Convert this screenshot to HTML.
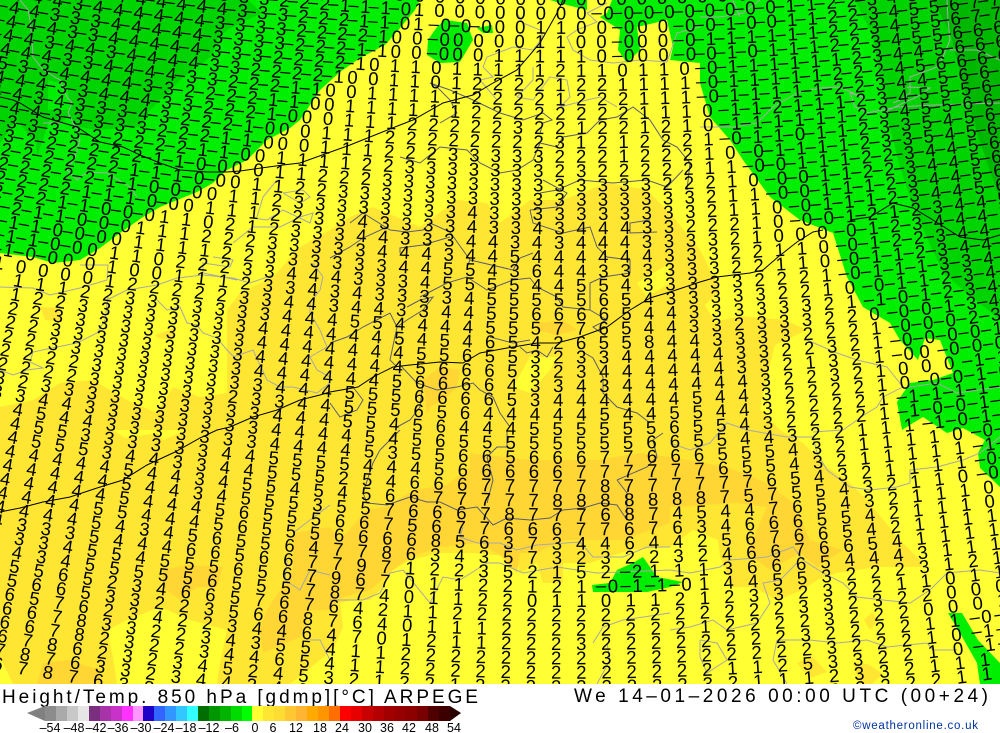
<!DOCTYPE html>
<html><head><meta charset="utf-8"><title>Height/Temp. 850 hPa ARPEGE</title>
<style>
html,body{margin:0;padding:0;background:#fff}
svg{display:block}
.n text{font:18.5px "Liberation Sans",sans-serif;fill:#000;font-kerning:none;text-rendering:geometricPrecision}
.n .d{transform:translateY(-1px)}
.h{fill:none}
.lt{fill:none;stroke:#a8a8a8;stroke-width:1}
.dk{fill:none;stroke:#5c5c72;stroke-width:1}
.bk{fill:none;stroke:#000;stroke-width:1}
.f text{font-family:"Liberation Sans",sans-serif;fill:#000}
</style></head><body>
<svg width="1000" height="733" viewBox="0 0 1000 733" xmlns="http://www.w3.org/2000/svg">
<defs><path id="p" d="M-40 -58.4Q500 45 1040 -34.7"/></defs>
<rect width="1000" height="733" fill="#ffff33"/>
<polygon fill="#ffe633" points="0,407 33,400 60,383 93,380 127,400 157,413 173,387 200,397 227,393 227,310 240,293 273,277 300,247 330,230 350,217 373,207 420,227 457,200 487,203 500,223 530,200 563,200 607,183 647,190 670,213 700,250 720,290 705,305 715,322 740,316 785,320 807,330 775,345 765,385 760,410 780,430 803,443 827,467 847,480 867,500 900,540 920,560 923,567 877,567 837,573 817,580 803,590 777,600 753,587 733,587 720,557 718,540 693,530 670,547 630,550 590,563 563,563 563,583 543,583 537,563 520,573 517,557 473,553 440,553 410,560 393,570 380,590 370,600 353,600 340,603 343,627 333,650 320,660 290,684 0,684"/>
<polygon fill="#ffff33" points="107,630 127,620 160,607 190,620 227,630 220,663 217,684 117,684 113,657"/>
<polygon fill="#ffff33" points="0,657 13,684 0,684"/>
<polygon fill="#ffff33" points="513,387 530,357 557,357 550,370 530,393"/>
<polygon fill="#ffff33" points="637,283 670,263 670,283 647,297"/>
<polygon fill="#ffff33" points="113,430 125,438 157,433 163,440 187,430"/>
<polygon fill="#ffe633" points="40,307 60,308 62,322 45,320"/>
<polygon fill="#ffe633" points="155,335 175,328 172,340 158,338"/>
<polygon fill="#ffe633" points="797,663 813,657 827,672 810,678"/>
<polygon fill="#ffe633" points="853,663 868,664 883,674 872,684 860,684"/>
<polygon fill="#ffe633" points="872,612 878,620 870,630 864,620"/>
<polygon fill="#ffd633" points="470,453 530,460 597,460 640,453 670,457 727,467 767,483 793,503 810,540 843,550 817,567 800,553 770,570 747,553 767,507 737,503 670,507 670,523 623,540 563,540 537,553 520,553 517,573 500,555 477,543 440,547 410,557 393,570 370,590 343,597 330,610 310,610 300,637 263,653 260,630 267,610 293,570 293,533 330,527 340,540 367,510 387,507 413,490 447,485 470,467"/>
<polygon fill="#ffd633" points="163,570 187,565 223,567 217,587 197,587 180,600 163,587"/>
<polygon fill="#ffd633" points="43,663 67,660 100,670 100,684 37,684"/>
<polygon fill="#ffd633" points="423,380 440,367 460,370 457,387 447,397 430,407 427,413"/>
<polygon fill="#ffd633" points="537,323 563,320 577,330 557,335 537,330"/>
<polygon fill="#00ee00" points="0,0 420,0 415,10 400,28 385,45 360,58 340,72 320,90 300,120 290,128 267,140 247,160 227,170 213,183 197,192 160,207 143,217 120,233 100,248 80,260 53,263 33,257 0,253"/>
<polygon fill="#00d400" points="0,0 248,0 262,13 247,20 227,30 217,40 213,55 197,67 180,80 163,97 150,110 140,127 120,128 97,130 80,127 67,117 60,125 50,118 37,157 36,140 30,137 17,120 0,143"/>
<polygon fill="#00ee00" points="48,80 67,85 70,110 48,110"/>
<polygon fill="#00ee00" points="445,20 467,23 473,40 460,62 440,63 427,55 428,40 437,27"/>
<polygon fill="#00ee00" points="477,28 492,25 493,33 483,33"/>
<polygon fill="#00ee00" points="550,0 587,0 587,10 567,5"/>
<polygon fill="#00ee00" points="612,0 1000,0 1000,487 980,468 978,453 985,440 963,428 947,433 923,417 913,423 902,430 897,402 910,383 933,380 953,373 940,340 925,338 918,360 900,340 890,323 863,307 847,277 833,233 800,220 770,197 743,160 730,140 710,117 700,83 700,63 670,60 673,47 667,20 637,27 640,50 627,63 618,50 620,30 600,17 607,13"/>
<polygon fill="#00d400" points="855,0 1000,0 1000,320 943,273 913,207 900,167 887,117 873,37"/>
<polygon fill="#00b800" points="933,0 1000,0 1000,200 977,133 963,83 950,33"/>
<polygon fill="#00ee00" points="948,613 962,613 978,640 1000,663 1000,684 980,684 977,663 960,633"/>
<polygon fill="#00ee00" points="643,557 657,577 683,582 670,587 647,592 593,592 592,585 610,583 617,570 633,563"/>
<polyline class="lt" points="20,0 28,10 30,20 32,40 33,57 43,70 60,80 67,97 72,103 68,113 77,130 80,140 75,157 67,170 77,180 87,172 107,173 130,187 137,197"/>
<polyline class="lt" points="43,123 63,123"/>
<polyline class="lt" points="607,3 587,13 597,22 577,30 567,37 573,50 590,60 613,63 640,60 667,62 677,33 700,27"/>
<polyline class="lt" points="517,13 523,23 540,30 543,37 533,50 513,47 487,57 483,67 493,77 480,80 497,100"/>
<polyline class="lt" points="533,67 533,80 517,97 533,100 550,77 567,80 570,97 560,107 587,100 600,97 617,107"/>
<polyline class="lt" points="700,17 720,17 743,13 760,0"/>
<polyline class="lt" points="733,0 740,17"/>
<polyline class="lt" points="947,0 948,20 950,40 943,57 937,67 910,77 910,93 900,100 893,103"/>
<polyline class="lt" points="950,50 977,50 1000,60"/>
<polyline class="lt" points="907,87 930,88 917,97 903,103 883,113"/>
<polyline class="lt" points="867,113 897,107 933,105 1000,103"/>
<polyline class="lt" points="700,127 733,127 757,123 773,107 797,93 820,88 840,87 857,95 865,98 850,93 855,107 867,112"/>
<polyline class="lt" points="0,287 33,288 50,295 80,288 107,280 108,265 80,265"/>
<polyline class="lt" points="107,300 127,290 157,285 177,278 203,275 233,278 250,283 273,275"/>
<polyline class="lt" points="157,300 167,310 180,307 187,323 197,325 203,333 217,338 227,350 237,360"/>
<polyline class="lt" points="0,370 13,375 27,370 43,368 30,362 33,352 57,347 77,343 97,333 105,320 108,297"/>
<polyline class="lt" points="233,243 253,227 280,227 300,217 313,213 310,223 283,210 267,220 253,218"/>
<polyline class="lt" points="277,180 263,197 257,217"/>
<polyline class="lt" points="283,193 300,203 310,197 303,190 283,193"/>
<polyline class="lt" points="213,257 233,260 230,267 203,263 203,273 223,277 237,280"/>
<polyline class="lt" points="313,263 323,277 320,290 310,303 310,313 320,330 327,347 310,357 317,370 330,377"/>
<polyline class="lt" points="233,357 253,350 267,380 280,387 293,387 317,393 330,383"/>
<polyline class="lt" points="463,527 460,537 477,543 500,543 517,550 537,545 580,542 593,557 623,557 647,547 670,547"/>
<polyline class="lt" points="330,600 363,600 380,593 390,573 403,570 430,603 443,577 460,580 487,563 500,563 523,573 557,567 597,573 670,570 690,573 720,567 730,560 767,557 793,547 803,560 823,573 843,583 857,597 883,600 910,603 930,590 947,573 980,570 1000,573"/>
<polyline class="lt" points="593,643 603,627 623,620 670,613"/>
<polyline class="lt" points="597,684 610,660 607,643"/>
<polyline class="lt" points="670,443 690,450 710,443 727,423 747,430 787,437 813,437 817,453 827,470 850,487 870,490 897,487 910,483 910,470 937,467 963,460 980,453 1000,437"/>
<polyline class="lt" points="807,340 837,353 857,360 887,367 903,387 883,397 877,407 867,413 843,430 813,432"/>
<polyline class="lt" points="903,388 937,383 957,393 1000,387"/>
<polyline class="lt" points="670,630 690,627 713,620 727,630 757,623 770,603 763,583 780,580 797,563"/>
<polyline class="lt" points="777,640 773,660 787,684"/>
<polyline class="lt" points="777,640 810,640 837,643 867,640 887,647 927,643 933,650 957,650"/>
<polyline class="lt" points="700,640 717,643 727,660 707,673 700,657 700,640"/>
<polyline class="lt" points="293,533 310,520 330,505"/>
<polyline class="lt" points="287,560 285,580 300,590 310,570 330,575"/>
<polyline class="lt" points="310,640 320,640 330,660"/>
<polyline class="dk" points="400,157 420,163 440,147 467,150 480,163 500,173 517,170 533,160 540,143 557,147 563,137 587,133 600,120 617,117 633,107 650,120 663,140 677,147 690,163 687,190"/>
<polyline class="dk" points="440,123 457,113 450,100 437,87 430,83 450,90 473,100 500,113 523,120 543,113 552,120 543,123 540,133"/>
<polyline class="dk" points="540,193 557,190 580,180 613,183 647,180 667,187 683,170"/>
<polyline class="dk" points="350,223 363,213 390,230 407,232 423,230 430,223 450,232 470,260"/>
<polyline class="dk" points="330,258 350,247 363,238 387,227"/>
<polyline class="dk" points="400,253 400,248 423,245 450,237"/>
<polyline class="dk" points="530,210 557,207 567,193 543,180"/>
<polyline class="dk" points="530,210 533,223 563,233 590,227 597,247 607,257 630,260 630,273 603,277 590,283 590,310 607,320 593,327 607,337"/>
<polyline class="dk" points="447,283 467,277 487,290 513,280 530,278 537,287 557,297 563,307 590,310"/>
<polyline class="dk" points="467,267 470,260 513,270 520,258 533,253"/>
<polyline class="dk" points="397,327 407,320 423,310 433,297 420,300 407,307"/>
<polyline class="dk" points="447,283 420,297"/>
<polyline class="dk" points="330,343 347,337 363,327 390,313 397,327 390,360 397,367"/>
<polyline class="dk" points="330,403 340,417 357,410 363,400 353,387"/>
<polyline class="dk" points="400,365 417,383 437,390 457,387 473,383 480,390 493,397 500,413 510,427"/>
<polyline class="dk" points="423,383 420,407 410,420 397,427"/>
<polyline class="dk" points="490,337 513,343 530,340"/>
<polyline class="dk" points="520,347 527,353 537,350 547,357 553,347"/>
<polyline class="dk" points="583,352 593,358 603,377 603,393 617,407 637,413 650,423"/>
<polyline class="dk" points="650,220 630,223 630,233 657,232"/>
<polyline class="dk" points="367,503 387,505 410,497 427,502 440,502 457,510 477,507 493,525 507,518 530,520 550,518 563,510 583,508 600,503 617,505 627,520"/>
<polyline class="dk" points="367,503 363,493 373,463 380,450 400,430"/>
<polyline class="dk" points="487,457 493,480 487,503"/>
<polyline class="dk" points="487,457 497,447 507,447 507,430"/>
<polyline class="dk" points="617,480 647,467 657,457 653,440 663,433"/>
<polyline class="dk" points="617,480 627,493 627,520"/>
<polyline class="bk" points="0,512 20,508 43,502 70,497 97,488 123,480 147,465 175,452 200,438 217,430 230,427 253,417 277,410 300,400 320,395 330,392 358,387 373,377 393,367 410,365 440,362 463,363 480,353 507,348 537,343 557,343 580,337 607,327 630,310 650,298 670,292 700,282 717,277 750,273 763,270 778,257 797,242 813,232 823,230"/>
<polyline class="bk" points="0,97 13,100 20,103 43,117 77,127 100,142 123,147 140,155 160,163 180,170 207,172 227,172 240,171 283,165 300,163 350,145 400,125 413,120 443,103 473,95 493,83 517,70 540,43 557,13 563,0"/>
<polyline class="bk" points="850,220 870,217 893,203 913,208 933,220 960,237 983,240 1000,235"/>
<g class="n">
<g transform="translate(0,5.17)" letter-spacing="9.9"><text><textPath href="#p" startOffset="13.76">000000000000000000000000000000000000000000000</textPath></text></g>
<g transform="translate(0,19.5)" letter-spacing="10.01"><text><textPath href="#p" startOffset="10.55"><tspan dx="7">4444444444443332221110</tspan><tspan dx="-7">100000000</tspan><tspan dx="7">00000000011223455677</tspan></textPath></text><text class="d"><textPath href="#p" startOffset="5.55">––––––––––––––––––––––<tspan class="h">–––––––––</tspan>––––––––––––––––––––</textPath></text></g>
<g transform="translate(0,33.83)" letter-spacing="10.12"><text><textPath href="#p" startOffset="7.34"><tspan dx="7">4444444444444333222110</tspan><tspan dx="-7">1</tspan><tspan dx="7">000</tspan><tspan dx="-7">001100</tspan><tspan dx="7">0</tspan><tspan dx="-7">00</tspan><tspan dx="7">0010011223455677</tspan></textPath></text><text class="d"><textPath href="#p" startOffset="2.34">––––––––––––––––––––––<tspan class="h">–</tspan>–––<tspan class="h">––––––</tspan>–<tspan class="h">––</tspan>––––––––––––––––</textPath></text></g>
<g transform="translate(0,48.16)" letter-spacing="10.22"><text><textPath href="#p" startOffset="4.13"><tspan dx="7">444443444444333322221</tspan><tspan dx="-7">00</tspan><tspan dx="7">0</tspan><tspan dx="-7">00001100</tspan><tspan dx="7">0</tspan><tspan dx="-7">00</tspan><tspan dx="7">0111111223455677</tspan></textPath></text><text class="d"><textPath href="#p" startOffset="-0.87">–––––––––––––––––––––<tspan class="h">––</tspan>–<tspan class="h">––––––––</tspan>–<tspan class="h">––</tspan>––––––––––––––––</textPath></text></g>
<g transform="translate(0,62.49)" letter-spacing="10.33"><text><textPath href="#p" startOffset="0.92"><tspan dx="7">444433344444333322211</tspan><tspan dx="-7">00</tspan><tspan dx="7">0</tspan><tspan dx="-7">00111110</tspan><tspan dx="7">0</tspan><tspan dx="-7">00</tspan><tspan dx="7">0010111223455666</tspan></textPath></text><text class="d"><textPath href="#p" startOffset="-4.08">–––––––––––––––––––––<tspan class="h">––</tspan>–<tspan class="h">––––––––</tspan>–<tspan class="h">––</tspan>––––––––––––––––</textPath></text></g>
<g transform="translate(0,76.82)" letter-spacing="10.44"><text><textPath href="#p" startOffset="-2.29"><tspan dx="7">44444334444433322221</tspan><tspan dx="-7">0110111112110110</tspan><tspan dx="7">011111123445666</tspan></textPath></text><text class="d"><textPath href="#p" startOffset="-7.29">––––––––––––––––––––<tspan class="h">––––––––––––––––</tspan>–––––––––––––––</textPath></text></g>
<g transform="translate(0,91.15)" letter-spacing="10.55"><text><textPath href="#p" startOffset="-5.5"><tspan dx="7">4444344344443322221</tspan><tspan dx="-7">00110122221221111</tspan><tspan dx="7">011111222456666</tspan></textPath></text><text class="d"><textPath href="#p" startOffset="-10.5">–––––––––––––––––––<tspan class="h">–––––––––––––––––</tspan>–––––––––––––––</textPath></text></g>
<g transform="translate(0,105.48)" letter-spacing="10.65"><text><textPath href="#p" startOffset="-8.71"><tspan dx="7">444443344443322211</tspan><tspan dx="-7">001111122221222111</tspan><tspan dx="7">011111223445666</tspan></textPath></text><text class="d"><textPath href="#p" startOffset="-13.71">––––––––––––––––––<tspan class="h">––––––––––––––––––</tspan>–––––––––––––––</textPath></text></g>
<g transform="translate(0,119.81)" letter-spacing="10.76"><text><textPath href="#p" startOffset="-11.92"><tspan dx="7">445334444332222110</tspan><tspan dx="-7">0111111222222221110</tspan><tspan dx="7">11211123455566</tspan></textPath></text><text class="d"><textPath href="#p" startOffset="-16.92">––––––––––––––––––<tspan class="h">–––––––––––––––––––</tspan>––––––––––––––</textPath></text></g>
<g transform="translate(0,134.14)" letter-spacing="10.87"><text><textPath href="#p" startOffset="-15.13"><tspan dx="7">44444334443322210</tspan><tspan dx="-7">00111222223221221210</tspan><tspan dx="7">11111123455666</tspan></textPath></text><text class="d"><textPath href="#p" startOffset="-20.13">–––––––––––––––––<tspan class="h">––––––––––––––––––––</tspan>––––––––––––––</textPath></text></g>
<g transform="translate(0,148.47)" letter-spacing="10.97"><text><textPath href="#p" startOffset="-18.34"><tspan dx="7">4444343334322210</tspan><tspan dx="-7">001112222222231212221</tspan><tspan dx="7">01101123354566</tspan></textPath></text><text class="d"><textPath href="#p" startOffset="-23.34">––––––––––––––––<tspan class="h">–––––––––––––––––––––</tspan>––––––––––––––</textPath></text></g>
<g transform="translate(0,162.8)" letter-spacing="11.08"><text><textPath href="#p" startOffset="-21.55"><tspan dx="7">4444433333222110</tspan><tspan dx="-7">0011122233333222122210</tspan><tspan dx="7">0111123354566</tspan></textPath></text><text class="d"><textPath href="#p" startOffset="-26.55">––––––––––––––––<tspan class="h">––––––––––––––––––––––</tspan>–––––––––––––</textPath></text></g>
<g transform="translate(0,177.13)" letter-spacing="11.19"><text><textPath href="#p" startOffset="-24.76"><tspan dx="7">443333322222110</tspan><tspan dx="-7">01111223333333232222211</tspan><tspan dx="7">0011122344566</tspan></textPath></text><text class="d"><textPath href="#p" startOffset="-29.76">–––––––––––––––<tspan class="h">–––––––––––––––––––––––</tspan>–––––––––––––</textPath></text></g>
<g transform="translate(0,191.46)" letter-spacing="11.29"><text><textPath href="#p" startOffset="-27.97"><tspan dx="7">33332222221100</tspan><tspan dx="-7">0011222333333333333322210</tspan><tspan dx="7">001122344566</tspan></textPath></text><text class="d"><textPath href="#p" startOffset="-32.97">––––––––––––––<tspan class="h">–––––––––––––––––––––––––</tspan>––––––––––––</textPath></text></g>
<g transform="translate(0,205.79)" letter-spacing="11.4"><text><textPath href="#p" startOffset="-31.18"><tspan dx="7">22222222211100</tspan><tspan dx="-7">0112233333333333333333211</tspan><tspan dx="7">001112344566</tspan></textPath></text><text class="d"><textPath href="#p" startOffset="-36.18">––––––––––––––<tspan class="h">–––––––––––––––––––––––––</tspan>––––––––––––</textPath></text></g>
<g transform="translate(0,220.12)" letter-spacing="11.51"><text><textPath href="#p" startOffset="-34.39"><tspan dx="7">2222222211000</tspan><tspan dx="-7">011233333333433333333332110</tspan><tspan dx="7">01112344566</tspan></textPath></text><text class="d"><textPath href="#p" startOffset="-39.39">–––––––––––––<tspan class="h">–––––––––––––––––––––––––––</tspan>–––––––––––</textPath></text></g>
<g transform="translate(0,234.45)" letter-spacing="11.62"><text><textPath href="#p" startOffset="-37.6"><tspan dx="7">222222211100</tspan><tspan dx="-7">0111223343333433434443322210</tspan><tspan dx="7">00121234455</tspan></textPath></text><text class="d"><textPath href="#p" startOffset="-42.6">––––––––––––<tspan class="h">––––––––––––––––––––––––––––</tspan>–––––––––––</textPath></text></g>
<g transform="translate(0,248.78)" letter-spacing="11.72"><text><textPath href="#p" startOffset="-40.81"><tspan dx="7">22222211000</tspan><tspan dx="-7">1102123334433344343444333321000</tspan><tspan dx="7">012344455</tspan></textPath></text><text class="d"><textPath href="#p" startOffset="-45.81">–––––––––––<tspan class="h">–––––––––––––––––––––––––––––––</tspan>–––––––––</textPath></text></g>
<g transform="translate(0,263.11)" letter-spacing="11.83"><text><textPath href="#p" startOffset="-44.02"><tspan dx="7">2222211000</tspan><tspan dx="-7">11122233333444344544444433322110</tspan><tspan dx="7">012234445</tspan></textPath></text><text class="d"><textPath href="#p" startOffset="-49.02">––––––––––<tspan class="h">––––––––––––––––––––––––––––––––</tspan>–––––––––</textPath></text></g>
<g transform="translate(0,277.44)" letter-spacing="11.94"><text><textPath href="#p" startOffset="-47.23"><tspan dx="7">222211000</tspan><tspan dx="-7">011112233333344554364433333322110</tspan><tspan dx="7">011234445</tspan></textPath></text><text class="d"><textPath href="#p" startOffset="-52.23">–––––––––<tspan class="h">–––––––––––––––––––––––––––––––––</tspan>–––––––––</textPath></text></g>
<g transform="translate(0,291.77)" letter-spacing="12.04"><text><textPath href="#p" startOffset="-50.44"><tspan dx="7">11111100</tspan><tspan dx="-7">0110222334443334555544554333332221</tspan><tspan dx="7">011133445</tspan></textPath></text><text class="d"><textPath href="#p" startOffset="-55.44">––––––––<tspan class="h">––––––––––––––––––––––––––––––––––</tspan>–––––––––</textPath></text></g>
<g transform="translate(0,306.1)" letter-spacing="12.15"><text><textPath href="#p" startOffset="-53.65"><tspan dx="7">1111100</tspan><tspan dx="-7">001001112334343333455555654333332210</tspan><tspan dx="7">01123445</tspan></textPath></text><text class="d"><textPath href="#p" startOffset="-58.65">–––––––<tspan class="h">––––––––––––––––––––––––––––––––––––</tspan>––––––––</textPath></text></g>
<g transform="translate(0,320.43)" letter-spacing="12.26"><text><textPath href="#p" startOffset="-56.86">0000100001222223344344334455666654433333321<tspan dx="7">10123445</tspan></textPath></text><text class="d"><textPath href="#p" startOffset="-61.86"><tspan class="h">–––––––––––––––––––––––––––––––––––––––––––</tspan>––––––––</textPath></text></g>
<g transform="translate(0,334.76)" letter-spacing="12.36"><text><textPath href="#p" startOffset="-60.07">00001111223333333444554444555776544332333220<tspan dx="7">0013445</tspan></textPath></text><text class="d"><textPath href="#p" startOffset="-65.07"><tspan class="h">––––––––––––––––––––––––––––––––––––––––––––</tspan>–––––––</textPath></text></g>
<g transform="translate(0,349.09)" letter-spacing="12.47"><text><textPath href="#p" startOffset="-63.28">00002122333333334444445454654265584433332221<tspan dx="7">0002344</tspan></textPath></text><text class="d"><textPath href="#p" startOffset="-68.28"><tspan class="h">––––––––––––––––––––––––––––––––––––––––––––</tspan>–––––––</textPath></text></g>
<g transform="translate(0,363.42)" letter-spacing="12.58"><text><textPath href="#p" startOffset="-66.49">00002223333333334444444556553233444443322321<tspan dx="7">00001</tspan></textPath></text><text class="d"><textPath href="#p" startOffset="-71.49"><tspan class="h">––––––––––––––––––––––––––––––––––––––––––––</tspan>–––––</textPath></text></g>
<g transform="translate(0,377.75)" letter-spacing="12.69"><text><textPath href="#p" startOffset="-69.7">00000223333333334444444566653234444443321321<tspan dx="7">0</tspan><tspan dx="-7">0</tspan><tspan dx="7">000</tspan></textPath></text><text class="d"><textPath href="#p" startOffset="-74.7"><tspan class="h">––––––––––––––––––––––––––––––––––––––––––––</tspan>–<tspan class="h">–</tspan>–––</textPath></text></g>
<g transform="translate(0,392.08)" letter-spacing="12.79"><text><textPath href="#p" startOffset="-72.91">00000223333333334444445666643343444444322321000<tspan dx="7">11</tspan></textPath></text><text class="d"><textPath href="#p" startOffset="-77.91"><tspan class="h">–––––––––––––––––––––––––––––––––––––––––––––––</tspan>––</textPath></text></g>
<g transform="translate(0,406.41)" letter-spacing="12.9"><text><textPath href="#p" startOffset="-76.12">000002222333333334445556666534444445443222210<tspan dx="7">0010</tspan></textPath></text><text class="d"><textPath href="#p" startOffset="-81.12"><tspan class="h">–––––––––––––––––––––––––––––––––––––––––––––</tspan>––––</textPath></text></g>
<g transform="translate(0,420.74)" letter-spacing="13.01"><text><textPath href="#p" startOffset="-79.33">00000222233333323344555656444445445544322221<tspan dx="7">11111</tspan></textPath></text><text class="d"><textPath href="#p" startOffset="-84.33"><tspan class="h">––––––––––––––––––––––––––––––––––––––––––––</tspan>–––––</textPath></text></g>
<g transform="translate(0,435.07)" letter-spacing="13.11"><text><textPath href="#p" startOffset="-82.54">00000323333333333444554564445555556554322221<tspan dx="7">10011</tspan></textPath></text><text class="d"><textPath href="#p" startOffset="-87.54"><tspan class="h">––––––––––––––––––––––––––––––––––––––––––––</tspan>–––––</textPath></text></g>
<g transform="translate(0,449.4)" letter-spacing="13.22"><text><textPath href="#p" startOffset="-85.75">000003344333333334444545655555555665544322111<tspan dx="7">1010</tspan></textPath></text><text class="d"><textPath href="#p" startOffset="-90.75"><tspan class="h">–––––––––––––––––––––––––––––––––––––––––––––</tspan>––––</textPath></text></g>
<g transform="translate(0,463.73)" letter-spacing="13.33"><text><textPath href="#p" startOffset="-88.96">00000445443333333444453556656667766655543211110<tspan dx="7">01</tspan></textPath></text><text class="d"><textPath href="#p" startOffset="-93.96"><tspan class="h">–––––––––––––––––––––––––––––––––––––––––––––––</tspan>––</textPath></text></g>
<g transform="translate(0,478.06)" letter-spacing="13.43"><text><textPath href="#p" startOffset="-92.17">00000445533333344555544456666677777765543211111<tspan dx="7">10</tspan></textPath></text><text class="d"><textPath href="#p" startOffset="-97.17"><tspan class="h">–––––––––––––––––––––––––––––––––––––––––––––––</tspan>––</textPath></text></g>
<g transform="translate(0,492.39)" letter-spacing="13.54"><text><textPath href="#p" startOffset="-95.38">00000045553443344555254666777778777777654321111<tspan dx="7">00</tspan></textPath></text><text class="d"><textPath href="#p" startOffset="-100.38"><tspan class="h">–––––––––––––––––––––––––––––––––––––––––––––––</tspan>––</textPath></text></g>
<g transform="translate(0,506.72)" letter-spacing="13.65"><text><textPath href="#p" startOffset="-98.59">00000044444544345545456677777888888875755432110<tspan dx="7">01</tspan></textPath></text><text class="d"><textPath href="#p" startOffset="-103.59"><tspan class="h">–––––––––––––––––––––––––––––––––––––––––––––––</tspan>––</textPath></text></g>
<g transform="translate(0,521.05)" letter-spacing="13.76"><text><textPath href="#p" startOffset="-101.8">0000004444454434555355766678777687454476543211100</textPath></text></g>
<g transform="translate(0,535.38)" letter-spacing="13.86"><text><textPath href="#p" startOffset="-105.01">0000004444454445655566756776667767634666554211100</textPath></text></g>
<g transform="translate(0,549.71)" letter-spacing="13.97"><text><textPath href="#p" startOffset="-108.22">0000004444554445655566668563734464425676654211111</textPath></text></g>
<g transform="translate(0,564.04)" letter-spacing="14.08"><text><textPath href="#p" startOffset="-111.43">0000004444543456556477863435732322324667665411111</textPath></text></g>
<g transform="translate(0,578.37)" letter-spacing="14.18"><text><textPath href="#p" startOffset="-114.64">00000043335444665667797122352152<tspan dx="7">2</tspan><tspan dx="-7">1113666544431111</tspan></textPath></text><text class="d"><textPath href="#p" startOffset="-119.64"><tspan class="h">––––––––––––––––––––––––––––––––</tspan>–</textPath></text></g>
<g transform="translate(0,592.7)" letter-spacing="14.29"><text><textPath href="#p" startOffset="-117.85">0000003334554555656796701122121<tspan dx="7">0110</tspan><tspan dx="-7">14455322231212</tspan></textPath></text><text class="d"><textPath href="#p" startOffset="-122.85"><tspan class="h">–––––––––––––––––––––––––––––––</tspan>––––</textPath></text></g>
<g transform="translate(0,607.03)" letter-spacing="14.4"><text><textPath href="#p" startOffset="-121.06">0000004434555556555787401122011011212332322110111</textPath></text></g>
<g transform="translate(0,621.36)" letter-spacing="14.5"><text><textPath href="#p" startOffset="-124.27">00000005565234665767642112222222222222233232200022</textPath></text></g>
<g transform="translate(0,635.69)" letter-spacing="14.61"><text><textPath href="#p" startOffset="-127.48">0000000566533223566876401112222222212222322200011</textPath></text></g>
<g transform="translate(0,650.02)" letter-spacing="14.72"><text><textPath href="#p" startOffset="-130.69">0000000657623422344647012112223222222223222211<tspan dx="7">002</tspan></textPath></text><text class="d"><textPath href="#p" startOffset="-135.69"><tspan class="h">––––––––––––––––––––––––––––––––––––––––––––––</tspan>–––</textPath></text></g>
<g transform="translate(0,664.35)" letter-spacing="14.83"><text><textPath href="#p" startOffset="-133.9">0000000667833223435541122222222322222222322210<tspan dx="7">111</tspan></textPath></text><text class="d"><textPath href="#p" startOffset="-138.9"><tspan class="h">––––––––––––––––––––––––––––––––––––––––––––––</tspan>–––</textPath></text></g>
<g transform="translate(0,678.68)" letter-spacing="14.93"><text><textPath href="#p" startOffset="-137.11">0000000667823223446541122222222222221125332210<tspan dx="7">111</tspan></textPath></text><text class="d"><textPath href="#p" startOffset="-142.11"><tspan class="h">––––––––––––––––––––––––––––––––––––––––––––––</tspan>–––</textPath></text></g>
<g transform="translate(0,693.01)" letter-spacing="15.04"><text><textPath href="#p" startOffset="-140.32">00000006786232345245321221222222222321112332111<tspan dx="7">11</tspan></textPath></text><text class="d"><textPath href="#p" startOffset="-145.32"><tspan class="h">–––––––––––––––––––––––––––––––––––––––––––––––</tspan>––</textPath></text></g>
<g transform="translate(0,707.34)" letter-spacing="15.15"><text><textPath href="#p" startOffset="-143.53">00000007876332344346522222222222222222222222211<tspan dx="7">11</tspan></textPath></text><text class="d"><textPath href="#p" startOffset="-148.53"><tspan class="h">–––––––––––––––––––––––––––––––––––––––––––––––</tspan>––</textPath></text></g>
<g transform="translate(0,721.67)" letter-spacing="15.25"><text><textPath href="#p" startOffset="-146.74">000000067876332344546222222222</textPath></text></g>
</g>
<rect x="0" y="684" width="1000" height="49" fill="#fff"/>
<g class="f">
<text x="2" y="703" font-size="19" textLength="476" lengthAdjust="spacing">Height/Temp. 850 hPa [gdmp][°C] ARPEGE</text>
<text x="574" y="702" font-size="19" textLength="414" lengthAdjust="spacing">We 14–01–2026 00:00 UTC (00+24)</text>
<polygon points="27,713 45,706 45,721" fill="#808080"/>
<rect x="45" y="706" width="11" height="15" fill="#8c8c8c"/><rect x="56" y="706" width="11" height="15" fill="#aaaaaa"/><rect x="67" y="706" width="11" height="15" fill="#c8c8c8"/><rect x="78" y="706" width="11" height="15" fill="#e6e6e6"/>
<rect x="89" y="706" width="11" height="15" fill="#7b2f7f"/><rect x="100" y="706" width="11" height="15" fill="#a832a8"/><rect x="111" y="706" width="11" height="15" fill="#c832c8"/><rect x="122" y="706" width="11" height="15" fill="#ff32ff"/><rect x="133" y="706" width="10" height="15" fill="#ff96ff"/>
<rect x="143" y="706" width="11" height="15" fill="#1e00c8"/><rect x="154" y="706" width="11" height="15" fill="#3264ff"/><rect x="165" y="706" width="11" height="15" fill="#3296ff"/><rect x="176" y="706" width="11" height="15" fill="#32c8ff"/><rect x="187" y="706" width="11" height="15" fill="#32ffff"/>
<rect x="198" y="706" width="11" height="15" fill="#006e00"/><rect x="209" y="706" width="11" height="15" fill="#009600"/><rect x="220" y="706" width="11" height="15" fill="#00b400"/><rect x="231" y="706" width="11" height="15" fill="#00dc00"/><rect x="242" y="706" width="10" height="15" fill="#00ff00"/>
<rect x="252" y="706" width="11" height="15" fill="#ffff32"/><rect x="263" y="706" width="11" height="15" fill="#ffe632"/><rect x="274" y="706" width="11" height="15" fill="#ffdc32"/><rect x="285" y="706" width="11" height="15" fill="#ffc832"/><rect x="296" y="706" width="11" height="15" fill="#ffb432"/><rect x="307" y="706" width="11" height="15" fill="#ffaa00"/><rect x="318" y="706" width="11" height="15" fill="#ff9600"/><rect x="329" y="706" width="11" height="15" fill="#ff6e00"/>
<rect x="340" y="706" width="11" height="15" fill="#ff0000"/><rect x="351" y="706" width="11" height="15" fill="#e60000"/><rect x="362" y="706" width="11" height="15" fill="#c80000"/><rect x="373" y="706" width="11" height="15" fill="#b40000"/><rect x="384" y="706" width="11" height="15" fill="#a00000"/><rect x="395" y="706" width="11" height="15" fill="#960000"/><rect x="406" y="706" width="11" height="15" fill="#8c0000"/><rect x="417" y="706" width="11" height="15" fill="#780000"/><rect x="428" y="706" width="11" height="15" fill="#500000"/><rect x="439" y="706" width="11" height="15" fill="#3c0000"/>
<polygon points="450,706 461,713 450,721" fill="#280000"/>
<g font-size="12.5" text-anchor="middle">
<text x="50" y="732">–54</text><text x="74" y="732">–48</text><text x="96" y="732">–42</text><text x="118" y="732">–36</text><text x="141" y="732">–30</text><text x="164" y="732">–24</text><text x="186" y="732">–18</text><text x="209" y="732">–12</text><text x="232" y="732">–6</text>
<text x="255" y="732">0</text><text x="273" y="732">6</text><text x="296" y="732">12</text><text x="320" y="732">18</text><text x="342" y="732">24</text><text x="365" y="732">30</text><text x="387" y="732">36</text><text x="409" y="732">42</text><text x="432" y="732">48</text><text x="454" y="732">54</text>
</g>
<text x="853" y="729" font-size="11.5" textLength="125" lengthAdjust="spacing" style="fill:#0033a0">©weatheronline.co.uk</text>
</g>
</svg>
</body></html>
